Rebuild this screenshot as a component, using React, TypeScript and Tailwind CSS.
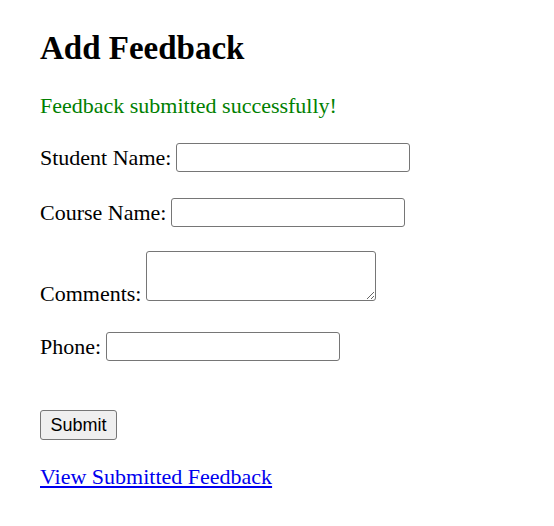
import React from "react";

export default function App() {
  const inputCls =
    "h-[29px] w-[234px] border border-[#767676] rounded-[3px] bg-white px-[3px] text-[18px] outline-none";
  return (
    <div className="min-h-[526px] w-[554px] bg-white pl-[40px] text-black" style={{ fontFamily: '"Liberation Serif", "Times New Roman", serif' }}>
      <h2 className="pt-[29px] text-[33px] font-bold leading-[38px]">Add Feedback</h2>
      <p className="mt-[26px] text-[22px] leading-[25px] text-[#008000]">Feedback submitted successfully!</p>
      <form className="flex flex-col items-start text-[22px]" onSubmit={(e) => e.preventDefault()}>
        <div className="mt-[25px] flex items-center gap-[5px]">
          <label className="leading-[25px]">Student Name:</label>
          <input type="text" className={inputCls} />
        </div>
        <div className="mt-[26px] flex items-center gap-[5px]">
          <label className="leading-[25px]">Course Name:</label>
          <input type="text" className={inputCls} />
        </div>
        <div className="mt-[24px] flex items-end gap-[5px]">
          <label className="leading-[15px]">Comments:</label>
          <textarea className="h-[50px] w-[230px] border border-[#767676] rounded-[3px] bg-white px-[3px] text-[18px] outline-none" />
        </div>
        <div className="mt-[31px] flex items-center gap-[5px]">
          <label className="leading-[25px]">Phone:</label>
          <input type="text" className={inputCls} />
        </div>
        <button
          type="submit"
          className="mt-[49px] h-[30px] w-[77px] rounded-[3px] border border-[#767676] bg-[#efefef] text-[18px] text-black"
          style={{ fontFamily: '"Liberation Sans", Arial, sans-serif' }}
        >
          Submit
        </button>
      </form>
      <div className="mt-[24px] text-[22px] leading-[25px]">
        <a href="#" className="text-[#0000ee] underline">View Submitted Feedback</a>
      </div>
    </div>
  );
}
